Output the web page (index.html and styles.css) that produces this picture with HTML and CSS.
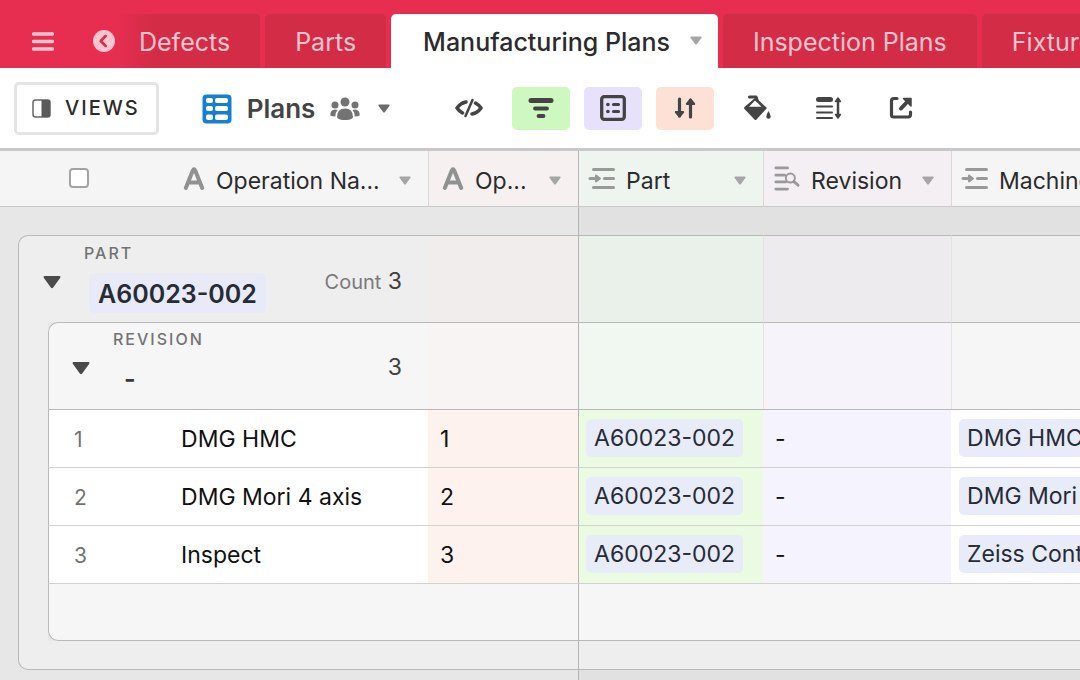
FILE: index.html
```html
<!DOCTYPE html>
<html lang="en">
<head>
<meta charset="utf-8">
<meta name="viewport" content="width=device-width, initial-scale=1">
<title>Manufacturing Plans</title>
<link rel="stylesheet" href="styles.css">
</head>
<body>
<svg class="defs" aria-hidden="true">
  <symbol id="caret" viewBox="0 0 12 9"><path d="M1 .5h10q1 .2.5 1.200L6.800 8.200q-.8.8-1.600 0L.5 1.700Q0 .7 1 .5z" fill="currentColor"/></symbol>
  <symbol id="text" viewBox="0 0 22 24"><path d="M2.800 21 9.800 3.500Q11 1 12.200 3.500L19.200 21M6 15.500h10" fill="none" stroke="currentColor" stroke-width="4" stroke-linecap="round" stroke-linejoin="round"/></symbol>
  <symbol id="link" viewBox="0 0 28 24"><path d="M5.500 2.500h20M16.500 11.500h9M5.500 20.500h20M2 11.500h8" fill="none" stroke="currentColor" stroke-width="3" stroke-linecap="round"/><path d="M8 8.500 12 11.500 8 14.500z" fill="currentColor" stroke="currentColor" stroke-width="2" stroke-linejoin="round"/></symbol>
  <symbol id="lookup" viewBox="0 0 27 27"><path d="M2 2h12M2 9.500h9M2 16.500h10M2 24h12" fill="none" stroke="currentColor" stroke-width="3" stroke-linecap="round"/><circle cx="17" cy="12.500" r="4.700" fill="none" stroke="currentColor" stroke-width="2"/><path d="m20.500 16 4.500 4" stroke="currentColor" stroke-width="3" stroke-linecap="round"/></symbol>
</svg>
<div class="app">
  <header class="topbar">
    <button class="menu" aria-label="Menu"><svg width="22" height="19" viewBox="0 0 22 19"><path d="M1.500 2h19M1.500 9.500h19M1.500 17h19" stroke="currentColor" stroke-width="3.500" stroke-linecap="round"/></svg></button>
    <button class="back" aria-label="Scroll tabs left"><svg width="22" height="22" viewBox="0 0 22 22"><circle cx="11" cy="11" r="11" fill="currentColor"/><path d="M12.700 6 7.700 11l5 5" fill="none" stroke="#d92d4b" stroke-width="2.500" stroke-linecap="round" stroke-linejoin="round"/></svg></button>
    <nav class="tabs">
      <a class="tab fade" href="#defects">Defects</a>
      <a class="tab" href="#parts">Parts</a>
      <a class="tab active" href="#plans" aria-current="page">Manufacturing Plans<svg class="caret light"><use href="#caret"/></svg></a>
      <a class="tab" href="#inspection">Inspection Plans</a>
      <a class="tab" href="#fixtures">Fixtures</a>
    </nav>
  </header>

  <div class="toolbar">
    <button class="views"><svg width="19" height="19" viewBox="0 0 19 19"><rect x="1" y="1" width="17" height="17" rx="2.500" fill="none" stroke="#666" stroke-width="1.500"/><path d="M9.500 1H16q2 0 2 2v13q0 2-2 2H9.500z" fill="#5a5a5a"/></svg>VIEWS</button>
    <button class="view-name">
      <svg width="30" height="30" viewBox="0 0 30 30"><rect x=".5" y=".5" width="29" height="29" rx="4" fill="#177fd1"/><g fill="#fff"><rect x="4" y="4" width="7" height="5" rx="2"/><rect x="13" y="4" width="13" height="5" rx="2"/><rect x="4" y="12" width="7" height="5" rx="2"/><rect x="13" y="12" width="13" height="5" rx="2"/><rect x="4" y="20.500" width="7" height="5.500" rx="2"/><rect x="13" y="20.500" width="13" height="5.500" rx="2"/></g></svg>
      <span>Plans</span>
      <svg width="30" height="24" viewBox="0 0 30 24" fill="#737373"><circle cx="15" cy="5" r="4.500"/><circle cx="5" cy="8" r="3.500"/><circle cx="25" cy="8" r="3.500"/><path d="M7 20q0-8.500 8-8.500t8 8.500q0 1.500-3 2.500-5 1-10 0-3-1-3-2.500z"/><path d="M7.500 13Q5.500 15 5.300 19.500 1.500 19.500.3 18.500 0 13 5 12.500zM22.500 13q2 2 2.200 6.500 3.800 0 5-1 .3-5.500-4.700-6z"/></svg>
      <svg class="caret"><use href="#caret"/></svg>
    </button>
    <div class="tools">
      <button aria-label="Hide fields"><svg width="28" height="20" viewBox="0 0 28 20" fill="none" stroke="currentColor" stroke-width="3.500" stroke-linecap="round" stroke-linejoin="round"><path d="M11 4Q5.500 5 2 10q2 3 5.500 5M17 16q5.500-1 9-6-2-3-5.500-5"/><path d="m17.500 2-7 16" stroke-width="2.500"/></svg></button>
      <button class="green" aria-label="Filter"><svg width="26" height="22" viewBox="0 0 26 22" fill="none" stroke="currentColor" stroke-linecap="round"><path d="M3 3.500h20" stroke-width="5"/><path d="M7 11.500h12M10.500 19h5" stroke-width="3.800"/></svg></button>
      <button class="purple" aria-label="Group"><svg width="26" height="26" viewBox="0 0 26 26" fill="none" stroke="currentColor" stroke-linecap="round"><rect x="1.700" y="1.700" width="22.600" height="22.600" rx="2.500" stroke-width="3.300"/><path d="M13.500 9.500h5M13.500 16.500h5" stroke-width="3.200"/><path d="M7.800 9.500h.2M7.800 16.500h.2" stroke-width="3.600"/></svg></button>
      <button class="orange" aria-label="Sort"><svg width="24" height="22" viewBox="0 0 24 22" fill="none" stroke="currentColor" stroke-width="3.200" stroke-linecap="round" stroke-linejoin="round"><path d="M6.500 2v17M17.500 20V3"/><path d="M2.800 15 6.500 19.500 10.200 15zM13.800 7 17.500 2.500 21.200 7z" fill="currentColor" stroke-width="2"/></svg></button>
      <button aria-label="Color"><svg width="28" height="26" viewBox="0 0 28 26" fill="currentColor"><path d="m12.500 2.500 11.500 10.500L13.500 24.500Q12.500 25.500 11.500 24.500L1.500 14q-.8-1 0-2z"/><path d="M6 11.800h12.500L12 5.500z" fill="#fff"/><path d="m6.500 2 6.500 0 1 3" fill="none" stroke="currentColor" stroke-width="3.200" stroke-linejoin="round" stroke-linecap="round"/><path d="M25.500 16q4.500 7.500 0 7.800-4.500-.3 0-7.800z"/></svg></button>
      <button aria-label="Row height"><svg width="26" height="24" viewBox="0 0 26 24" fill="none" stroke="currentColor" stroke-linecap="round"><path d="M2.500 3.500h12" stroke-width="5"/><path d="M1 10.500h15M1 16.500h15M1 22h15" stroke-width="2"/><path d="M22 4v16" stroke-width="2.500"/><path d="m19.500 5.500 2.500-3.500 2.500 3.500zM19.500 18.500l2.500 3.500 2.500-3.500z" fill="currentColor" stroke-width="1.500" stroke-linejoin="round"/></svg></button>
      <button aria-label="Share view"><svg width="24" height="24" viewBox="0 0 24 24" fill="none" stroke="currentColor" stroke-width="3.200" stroke-linecap="round" stroke-linejoin="round"><path d="M8 2.500H5q-2.500 0-2.500 2.500v14q0 2 2 2H19q2.500 0 2.500-2.500V16"/><path d="M12 12.500 19 5" stroke-width="4"/><path d="M14.500 2.500H22V10z" fill="currentColor" stroke-width="1.500"/></svg></button>
    </div>
  </div>

  <main class="sheet">
    <table>
      <colgroup><col class="c-gutter"><col class="c-inset"><col class="c-num"><col class="c-name"><col class="c-op"><col class="c-part"><col class="c-rev"><col></colgroup>
      <thead>
        <tr>
          <th colspan="3" class="select"><input type="checkbox" aria-label="Select all rows"></th>
          <th scope="col"><div class="field name"><svg class="ico-text"><use href="#text"/></svg><span>Operation Na...</span><svg class="caret light"><use href="#caret"/></svg></div></th>
          <th scope="col" class="op split"><div class="field"><svg class="ico-text"><use href="#text"/></svg><span>Op...</span><svg class="caret light"><use href="#caret"/></svg></div></th>
          <th scope="col" class="part frozen"><div class="field near"><svg class="ico-link"><use href="#link"/></svg><span>Part</span><svg class="caret light"><use href="#caret"/></svg></div></th>
          <th scope="col" class="rev split"><div class="field near"><svg class="ico-link"><use href="#lookup"/></svg><span>Revision</span><svg class="caret light"><use href="#caret"/></svg></div></th>
          <th scope="col" class="split"><div class="field near"><svg class="ico-link"><use href="#link"/></svg><span>Machine</span><svg class="caret light"><use href="#caret"/></svg></div></th>
        </tr>
      </thead>
      <tbody>
        <tr class="spacer"><td colspan="5"></td><td colspan="3" class="frozen"></td></tr>
        <tr class="group outer">
          <td class="gutter"></td>
          <th colspan="3" scope="rowgroup" class="corner">
            <div class="summary">
              <button class="toggle" aria-label="Collapse group"><svg><use href="#caret"/></svg></button>
              <div class="label"><small>PART</small><span class="chip big">A60023-002</span></div>
              <div class="count"><span>Count</span> 3</div>
            </div>
          </th>
          <td class="op"></td><td class="part frozen"></td><td class="rev split"></td><td class="split"></td>
        </tr>
        <tr class="group inner">
          <td class="gutter"></td><td class="inset"></td>
          <th colspan="2" scope="rowgroup" class="corner">
            <div class="summary">
              <button class="toggle" aria-label="Collapse group"><svg><use href="#caret"/></svg></button>
              <div class="label"><small>REVISION</small><span class="plain">-</span></div>
              <div class="count">3</div>
            </div>
          </th>
          <td class="op"></td><td class="part frozen"></td><td class="rev split"></td><td class="split"></td>
        </tr>
        <tr class="row first"><td class="gutter"></td><td class="inset"></td><td class="num">1</td><td class="name">DMG HMC</td><td class="op">1</td><td class="part frozen"><span class="chip">A60023-002</span></td><td class="rev">-</td><td class="linked"><span class="chip">DMG HMC</span></td></tr>
        <tr class="row"><td class="gutter"></td><td class="inset"></td><td class="num">2</td><td class="name">DMG Mori 4 axis</td><td class="op">2</td><td class="part frozen"><span class="chip">A60023-002</span></td><td class="rev">-</td><td class="linked"><span class="chip">DMG Mori 4 axis</span></td></tr>
        <tr class="row"><td class="gutter"></td><td class="inset"></td><td class="num">3</td><td class="name">Inspect</td><td class="op">3</td><td class="part frozen"><span class="chip">A60023-002</span></td><td class="rev">-</td><td class="linked"><span class="chip">Zeiss Contura</span></td></tr>
        <tr class="inner-end"><td class="gutter"></td><td class="inset"></td><td colspan="3" class="corner"></td><td colspan="3" class="frozen"></td></tr>
        <tr class="outer-end"><td class="gutter"></td><td colspan="4" class="corner"></td><td colspan="3" class="frozen"></td></tr>
        <tr class="spacer"><td colspan="5"></td><td colspan="3" class="frozen"></td></tr>
      </tbody>
    </table>
  </main>
</div>
</body>
</html>
```
FILE: styles.css
```css
* { box-sizing: border-box; }
body {
  margin: 0;
  font-family: Inter, "Liberation Sans", sans-serif;
  font-size: 23px;
  line-height: 28px;
  color: #111;
}
button { border: 0; padding: 0; background: none; font: inherit; color: inherit; }
svg { display: block; flex: none; }
.defs { position: absolute; width: 0; height: 0; }
.app { display: flex; flex-direction: column; height: 100vh; background: #e7e7e7; }

.caret { width: 12px; height: 9px; color: #6b6b6b; }
.caret.light { color: #a6a6a6; }

.topbar {
  display: flex;
  height: 68px;
  overflow: hidden;
  background: #e72e51;
  color: #ffc5cf;
}
.menu { padding: 14px 0 0 32px; }
.back { padding: 14px 0 0 39px; }
.tabs { display: flex; gap: 5px; padding-top: 14px; }
.tab {
  display: flex;
  align-items: center;
  padding: 2px 30px 0;
  border-radius: 5px 5px 0 0;
  background: #d32c46;
  color: inherit;
  font-size: 25px;
  white-space: nowrap;
  text-decoration: none;
}
.tab.fade { padding-left: 24px; background: linear-gradient(to right, #e72e51, #d32c46 40px); }
.tab.active { gap: 20px; padding: 2px 16px 0 32px; background: #fff; color: #2b2b2b; font-weight: 500; }
.tab .caret { margin-bottom: 4px; }

.toolbar {
  display: flex;
  align-items: center;
  height: 83px;
  padding: 0 14px;
  border-bottom: 3px solid #c8c8c8;
  background: #fff;
  color: #444;
}
.views {
  display: flex;
  align-items: center;
  gap: 14px;
  height: 53px;
  padding: 0 16px 0 15px;
  border: 3px solid #e3e5e5;
  border-radius: 5px;
  color: #2b2b2b;
  font-size: 20px;
  font-weight: 500;
  letter-spacing: 2px;
}
.view-name { display: flex; align-items: center; gap: 15px; margin-left: 43px; padding-top: 1px; font-size: 26px; font-weight: 600; }
.view-name .caret { margin-left: 3px; }
.tools { display: flex; gap: 14px; margin-left: 50px; }
.tools button { display: flex; align-items: center; justify-content: center; width: 58px; height: 43px; border-radius: 5px; }
.tools .green { background: #cff7c0; }
.tools .purple { background: #e8e1fc; }
.tools .orange { background: #fde1d5; }

.sheet { flex: 1; overflow: auto; scrollbar-width: none; }
table { width: 100%; min-width: 1152px; table-layout: fixed; border-collapse: separate; border-spacing: 0; }
th, td { padding: 0; text-align: left; font-weight: 400; white-space: nowrap; }
.c-gutter { width: 18px; }
.c-inset { width: 30px; }
.c-num { width: 64px; }
.c-name { width: 316px; }
.c-op { width: 150px; }
.c-part { width: 185px; }
.c-rev { width: 188px; }

td.frozen, th.frozen { border-left: 1px solid #b5b5b5; }
.split { border-left: 1px solid #d8d8d8; }
.group .split { border-left-color: #e3e3e3; }

thead th { height: 56px; border-bottom: 1px solid #c8c8c8; background: #f5f5f5; color: #2b2b2b; }
thead .op { background: #f6f1f0; }
thead .part { background: #eef4ee; }
thead .rev { background: #f3eff3; }
.select input {
  appearance: none;
  display: block;
  width: 20px;
  height: 20px;
  margin: 0 0 2px 69px;
  border: 2px solid #a3a3a3;
  border-radius: 4px;
  background: #fff;
}
.field { display: flex; align-items: center; gap: 11px; padding: 4px 17px 0 13px; }
.field.name { padding-left: 71px; }
.field.near { gap: 10px; padding-left: 9px; }
.field .caret { margin-left: auto; }
.field .ico-text { width: 22px; height: 24px; margin-bottom: 4px; color: #919191; }
.field .ico-link { width: 28px; height: 26px; margin-bottom: 4px; color: #999; }

.spacer td { height: 28px; }
.spacer .frozen { background: #e1e1e1; }

.group td, .group th { height: 87px; border-top: 1px solid #b9b9b9; }
td.gutter, .group td.gutter { border-top: 0; background: #e7e7e7; }
td.inset, .group td.inset { border-top: 0; border-left: 1px solid #b9b9b9; background: #eee; }
.group .corner { border-left: 1px solid #b9b9b9; border-radius: 10px 0 0 0; vertical-align: top; }
.outer td, .outer th { background: #eee; }
.outer .op { background: #f0edec; }
.outer .part { background: #eaf0ea; }
.outer .rev { background: #eeebef; }
.inner, .inner-end { background: #eee; }
.inner td, .inner th { background: #f6f6f6; }
.inner .op { background: #f8f4f3; }
.inner .part { background: #f1f8f1; }
.inner .rev { background: #f6f4fa; }

.summary { display: flex; align-items: flex-start; padding: 7px 26px 0 24px; }
.toggle { padding-top: 32px; color: #4a4a4a; }
.toggle svg { width: 18px; height: 14px; }
.label { display: flex; flex-direction: column; align-items: flex-start; gap: 10px; margin-left: 23px; }
.inner .summary { padding: 6px 26px 0 23px; }
.label small { color: #737373; font-size: 16px; line-height: 20px; letter-spacing: 2px; font-weight: 500; }
.plain { padding: 6px 0 0 11px; font-size: 25px; font-weight: 600; color: #3a3a3a; }
.count { margin-left: auto; padding-top: 24px; color: #3f3f3f; }
.count span { color: #7a7a7a; font-size: 20px; }

.chip {
  display: inline-block;
  padding: 5px 8px;
  border-radius: 5px;
  background: #e8ecf9;
  color: #262b36;
  vertical-align: middle;
}
.chip.big { margin-left: 5px; padding: 7px 9px 5px; background: #e8ebf7; font-size: 25px; font-weight: 600; }

.row td { height: 58px; border-top: 1px solid #d2d2d2; background: #fff; }
.row.first td { border-top-color: #b9b9b9; }
.row td.gutter { border-top: 0; background: #e7e7e7; }
.row td.inset { border-top: 0; background: #eee; }
.row .num { padding: 2px 0 0 25px; border-left: 1px solid #b9b9b9; color: #737373; font-size: 21px; }
.row .name { padding-left: 69px; }
.row .op { padding-left: 12px; background: #fef2ee; }
.row .part { padding: 0 0 2px 7px; background: #eafbe2; }
.row .rev { padding-left: 12px; background: #f5f3fe; }
.row .linked { padding: 0 0 2px 8px; }

.inner-end td { height: 58px; border-top: 1px solid #d2d2d2; border-bottom: 1px solid #b9b9b9; background: #f6f6f6; }
.inner-end td.gutter, .inner-end td.inset { border-top: 0; border-bottom: 0; }
.inner-end td.gutter { background: #e7e7e7; }
.inner-end td.inset { background: #eee; }
.inner-end .corner, .outer-end .corner { border-left: 1px solid #b9b9b9; border-radius: 0 0 0 10px; }
.outer-end td { height: 29px; border-bottom: 1px solid #b9b9b9; background: #eee; }
.outer-end td.gutter { border-bottom: 0; background: #e7e7e7; }
```
